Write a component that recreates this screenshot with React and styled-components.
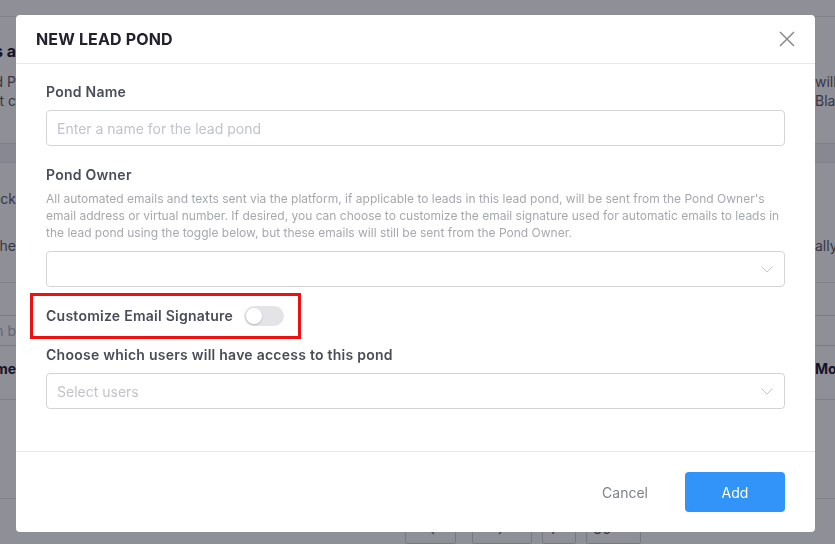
import React from 'react'
import styled, { createGlobalStyle } from 'styled-components'

const GlobalStyle = createGlobalStyle`
  html, body {
    margin: 0;
    padding: 0;
    width: 835px;
    height: 544px;
    overflow: hidden;
    font-family: Inter, "Noto Sans", "Liberation Sans", sans-serif;
    background: #ffffff;
  }
  * { box-sizing: border-box; }
`

/* ---------- background page (dimmed behind the modal) ---------- */

const Page = styled.div`
  width: 835px;
  height: 544px;
  background: #ffffff;
  color: #5c5f6a;
  display: flex;
  flex-direction: column;
`

const TopBar = styled.div`
  height: 17px;
  border-bottom: 1px solid #e6e6ea;
`

const Section = styled.div`
  display: flex;
  flex-direction: column;
  padding-top: ${p => p.$top || 0}px;
  height: ${p => p.$height}px;
  background: ${p => p.$band ? '#f3f3f6' : '#ffffff'};
  border-bottom: 1px solid #e3e3e8;
`

const BgRow = styled.div`
  display: flex;
  align-items: center;
  height: ${p => p.$h || 19}px;
  margin-top: ${p => p.$gap || 0}px;
  font-size: ${p => p.$size || 14}px;
  font-weight: ${p => p.$bold ? 700 : 400};
  color: ${p => p.$bold ? '#1f2130' : '#5c5f6a'};
  white-space: nowrap;
`

const LeftGutter = styled.div`
  width: 16px;
  flex: none;
  display: flex;
  justify-content: flex-end;
`

const Middle = styled.div`
  flex: 1;
`

const RightGutter = styled.div`
  width: 20px;
  flex: none;
  display: flex;
`

const SearchBox = styled.div`
  display: flex;
  align-items: center;
  height: 31px;
  margin-top: 32px;
  border-top: 1px solid #dcdce2;
  border-bottom: 1px solid #dcdce2;
  font-size: 14px;
  color: #b4b6be;
  white-space: nowrap;
`

const Pager = styled.div`
  display: flex;
  align-items: flex-start;
  padding: 13px 0 0 405px;
  gap: 10px;
  color: #5c5f6a;
  font-size: 15px;
`

const PagerBox = styled.div`
  width: ${p => p.$w}px;
  height: 32px;
  margin-right: ${p => p.$mr || 0}px;
  border: 1px solid #d6d6dc;
  border-radius: 2px;
  display: flex;
  align-items: center;
  justify-content: ${p => p.$left ? 'flex-start' : 'center'};
  padding-left: ${p => p.$left ? 6 : 0}px;
  gap: 6px;
`

/* ---------- modal ---------- */

const Overlay = styled.div`
  position: fixed;
  inset: 0;
  background: rgba(6, 6, 26, 0.45);
  display: flex;
  align-items: flex-start;
  padding: 15px 0 0 16px;
`

const Modal = styled.div`
  width: 799px;
  background: #ffffff;
  border-radius: 4px;
  display: flex;
  flex-direction: column;
  overflow: hidden;
`

const Header = styled.div`
  height: 49px;
  border-bottom: 1px solid #e8e8ec;
  display: flex;
  align-items: center;
  justify-content: space-between;
  padding: 0 19px 0 20px;
`

const Title = styled.h2`
  margin: 0;
  font-size: 16px;
  font-weight: 700;
  letter-spacing: 0.15px;
  color: #20222e;
`

const CloseButton = styled.button`
  border: none;
  background: none;
  padding: 0;
  width: 18px;
  height: 18px;
  display: flex;
  align-items: center;
  justify-content: center;
  cursor: pointer;
`

const Body = styled.div`
  padding: 18px 30px 42px;
  display: flex;
  flex-direction: column;
`

const Label = styled.div`
  font-size: 14px;
  line-height: 20px;
  font-weight: 600;
  letter-spacing: 0.25px;
  color: #4a4d59;
  margin-top: ${p => p.$top || 0}px;
`

const Help = styled.p`
  margin: 5px 0 0;
  font-size: 12px;
  line-height: 17px;
  color: #a6a8b0;
`

const Field = styled.div`
  height: 36px;
  margin-top: ${p => p.$top || 8}px;
  border: 1px solid #d3d4d8;
  border-radius: 4px;
  display: flex;
  align-items: center;
  justify-content: space-between;
  padding: 0 11px 0 10px;
  font-size: 14px;
  color: #c1c3ca;
`

const Highlight = styled.div`
  align-self: flex-start;
  margin: 6px 0 0 -16px;
  border: 3px solid #ee1111;
  padding: 10px 14px 10px 13px;
  display: flex;
  align-items: center;
  gap: 11px;
`

const Toggle = styled.span`
  width: 40px;
  height: 20px;
  border-radius: 10px;
  background: #e4e4e8;
  display: flex;
  align-items: center;
  padding: 2px;
  &::before {
    content: '';
    width: 16px;
    height: 16px;
    border-radius: 50%;
    background: #ffffff;
    box-shadow: 0 1px 2px rgba(0, 0, 0, 0.2);
  }
`

const Footer = styled.div`
  border-top: 1px solid #e8e8ec;
  padding: 20px 30px 20px;
  display: flex;
  justify-content: flex-end;
  align-items: center;
`

const TextButton = styled.button`
  border: none;
  background: none;
  font-family: inherit;
  font-size: 14px;
  color: #7f828b;
  padding: 0 16px;
  height: 40px;
  margin-right: 21px;
  cursor: pointer;
`

const PrimaryButton = styled.button`
  border: none;
  border-radius: 4px;
  background: #3294f8;
  color: #ffffff;
  font-family: inherit;
  font-size: 14px;
  width: 100px;
  height: 40px;
  cursor: pointer;
`

const Chevron = () => (
  <svg width="12" height="7" viewBox="0 0 12 7" fill="none">
    <path d="M0.5 0.5L6 6L11.5 0.5" stroke="#c4c5cb" strokeWidth="1" />
  </svg>
)

const CloseIcon = () => (
  <svg width="16" height="16" viewBox="0 0 16 16" fill="none">
    <path d="M1 1L15 15M15 1L1 15" stroke="#8c8e96" strokeWidth="1.6" />
  </svg>
)

const PagerArrow = ({ dir }) => (
  <svg width="8" height="14" viewBox="0 0 8 14" fill="none">
    <path d={dir === 'left' ? 'M7 1L1 7L7 13' : 'M1 1L7 7L1 13'} stroke="#6b6e78" strokeWidth="1.2" />
  </svg>
)

const BackgroundPage = () => (
  <Page>
    <TopBar />
    <Section $height={129} $top={22}>
      <BgRow $h={24} $size={16} $bold>
        <LeftGutter>Lead Ponds a</LeftGutter>
        <Middle />
        <RightGutter />
      </BgRow>
      <BgRow $gap={9}>
        <LeftGutter>Leads assigned to a Lead P</LeftGutter>
        <Middle />
        <RightGutter>will be</RightGutter>
      </BgRow>
      <BgRow>
        <LeftGutter>agents that c</LeftGutter>
        <Middle />
        <RightGutter>Blast</RightGutter>
      </BgRow>
    </Section>
    <Section $height={20} $band />
    <Section $height={122} $top={25}>
      <BgRow $h={20}>
        <LeftGutter>go back</LeftGutter>
        <Middle />
        <RightGutter />
      </BgRow>
      <BgRow $h={20} $gap={27}>
        <LeftGutter>the</LeftGutter>
        <Middle />
        <RightGutter>ally</RightGutter>
      </BgRow>
    </Section>
    <SearchBox>
      <LeftGutter>Search b</LeftGutter>
    </SearchBox>
    <Section $height={55} $top={13}>
      <BgRow $h={20} $bold>
        <LeftGutter>Name</LeftGutter>
        <Middle />
        <RightGutter>Modified</RightGutter>
      </BgRow>
    </Section>
    <Section $height={101} />
    <Pager>
      <PagerBox $w={51} $mr={6}><PagerArrow dir="left" /></PagerBox>
      <PagerBox $w={60}><PagerArrow dir="right" /></PagerBox>
      <PagerBox $w={34} $left>1</PagerBox>
      <PagerBox $w={55} $left>50 <Chevron /></PagerBox>
    </Pager>
  </Page>
)

const App = () => {
  return (
    <>
      <GlobalStyle />
      <BackgroundPage />
      <Overlay>
        <Modal>
          <Header>
            <Title>NEW LEAD POND</Title>
            <CloseButton aria-label="Close"><CloseIcon /></CloseButton>
          </Header>
          <Body>
            <Label>Pond Name</Label>
            <Field>Enter a name for the lead pond</Field>

            <Label $top={19}>Pond Owner</Label>
            <Help>
              All automated emails and texts sent via the platform, if applicable to leads in this lead pond, will be sent from the Pond Owner's email address or virtual number. If desired, you can choose to customize the email signature used for automatic emails to leads in the lead pond using the toggle below, but these emails will still be sent from the Pond Owner.
            </Help>
            <Field $top={10}><span /><Chevron /></Field>

            <Highlight>
              <Label>Customize Email Signature</Label>
              <Toggle />
            </Highlight>

            <Label $top={6}>Choose which users will have access to this pond</Label>
            <Field>Select users<Chevron /></Field>
          </Body>
          <Footer>
            <TextButton>Cancel</TextButton>
            <PrimaryButton>Add</PrimaryButton>
          </Footer>
        </Modal>
      </Overlay>
    </>
  )
}

export default App
